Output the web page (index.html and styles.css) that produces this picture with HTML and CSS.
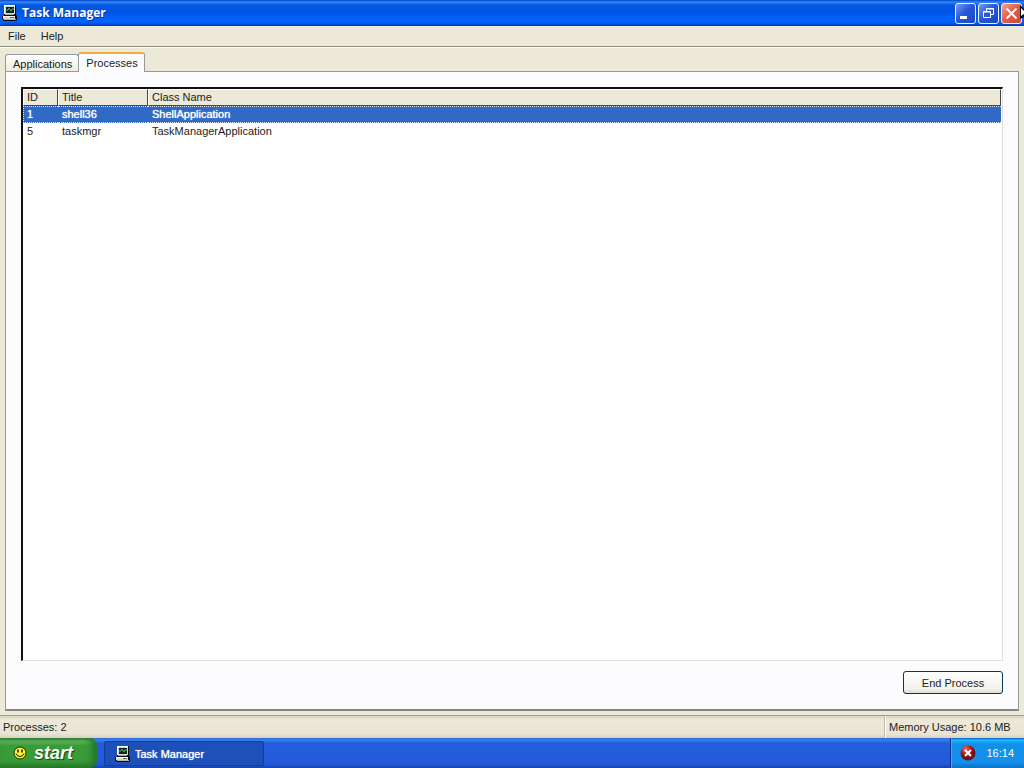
FILE: index.html
```html
<!DOCTYPE html>
<html lang="en">
<head>
<meta charset="utf-8">
<meta name="viewport" content="width=device-width, initial-scale=1">
<title>Task Manager</title>
<link rel="stylesheet" href="styles.css">
</head>
<body>
<svg class="defs" width="0" height="0" aria-hidden="true">
  <symbol id="computer" viewBox="0 0 16 16">
    <path d="M2 0h12v10l1 1v4l-1 1H2l-2-2v-3h2z" fill="#080c14"/>
    <path d="M2 0h11v9H2zM1 11h12v3H1z" fill="#d9d8cb"/>
    <path d="M2 0h11v1H3v8H2zM1 11h12v1H1z" fill="#fff"/>
    <path d="M4 2h8v6H4z" fill="#10231c"/>
    <path d="M4 5h2l1-2 2 3 1-2h2" fill="none" stroke="#47b584"/>
    <path d="M3 9h9v1H3z" fill="#aaa99e"/>
    <path d="M8 12.500h4" stroke="#62695f"/>
    <path d="M2 14h12v1H2z" fill="#b6b5aa"/>
  </symbol>
</svg>
<div class="desktop">
  <main class="window">
    <header class="titlebar">
      <svg class="icon"><use href="#computer"/></svg>
      <h1 class="title">Task Manager</h1>
      <div class="controls">
        <button class="control" aria-label="Minimize"><svg viewBox="0 0 19 19"><path d="M4 12h7v3H4z" fill="#fff"/></svg></button>
        <button class="control" aria-label="Restore"><svg viewBox="0 0 19 19"><path d="M7.500 7V4.500h7v6H12M7 5h8M4.500 7.500h7v6h-7zM4 8h8" fill="none" stroke="#fff"/></svg></button>
        <button class="control close" aria-label="Close"><svg viewBox="0 0 19 19"><path d="M4.500 4.500l10 10m0-10l-10 10" stroke="#fff" stroke-width="2"/></svg></button>
      </div>
      <svg class="pointer" viewBox="0 0 4 14"><path d="M0 0v14l4-2V4z" fill="#000"/><path d="M1 3v8l3-2V6z" fill="#fff"/></svg>
    </header>
    <nav class="menubar"><button class="menu">File</button><button class="menu">Help</button></nav>
    <div class="content">
      <div class="tabs" role="tablist">
        <button class="tab" role="tab" aria-selected="false">Applications</button>
        <button class="tab active" role="tab" aria-selected="true">Processes</button>
      </div>
      <section class="panel" role="tabpanel" aria-label="Processes">
        <div class="list">
          <table class="processes">
            <colgroup><col class="col-id"><col class="col-title"><col></colgroup>
            <thead><tr><th>ID</th><th>Title</th><th>Class Name</th></tr></thead>
            <tbody>
              <tr class="selected"><td>1</td><td>shell36</td><td>ShellApplication</td></tr>
              <tr><td>5</td><td>taskmgr</td><td>TaskManagerApplication</td></tr>
            </tbody>
          </table>
        </div>
        <button class="end">End Process</button>
      </section>
    </div>
    <footer class="status"><span>Processes: 2</span><span class="memory">Memory Usage: 10.6 MB</span></footer>
  </main>
  <nav class="taskbar">
    <button class="start">
      <svg class="smiley" viewBox="0 0 14 14"><circle cx="7" cy="7" r="6" fill="#fff22c" stroke="#153908"/><path d="M5 3.500v3M9 3.500v3" stroke="#111" stroke-width="1.500"/><path d="M3 7.500q1 3 4 3t4-3" fill="none" stroke="#111"/></svg>
      <span>start</span>
    </button>
    <button class="task"><svg class="icon"><use href="#computer"/></svg><span>Task Manager</span></button>
    <div class="tray">
      <svg class="alert" viewBox="0 0 16 16" role="img" aria-label="Alert"><defs><radialGradient id="red" cx=".35" cy=".25"><stop offset="0" stop-color="#ef7770"/><stop offset=".6" stop-color="#c91b18"/><stop offset="1" stop-color="#760e18"/></radialGradient></defs><circle cx="8" cy="8" r="7.500" fill="url(#red)"/><path d="M5 5l6 6m0-6l-6 6" stroke="#fff" stroke-width="2.200"/></svg>
      <time>16:14</time>
    </div>
  </nav>
</div>
</body>
</html>
```
FILE: styles.css
```css
* { box-sizing: border-box; }
body { margin: 0; font: 11px/14px "Liberation Sans", Arial, sans-serif; color: #222; }
button { font: inherit; color: inherit; padding: 0; margin: 0; border: 0; background: none; }
svg { display: block; }
.defs { position: absolute; }
.icon { width: 16px; height: 16px; flex: none; }
.desktop, .window { display: flex; flex-direction: column; }
.desktop { height: 100vh; overflow: hidden; }
.window { flex: 1; min-height: 0; background: #ece9d8; }

.titlebar { position: relative; flex: none; display: flex; align-items: center; gap: 4px; height: 26px; padding: 0 2px; background: linear-gradient(#0842c4 0, #2e8aff 2px, #0757df 5px, #0054e6 12px, #0064ff 21px, #005bf0 23px, #0039ba 26px); }
.title { flex: 1; margin: 0; color: #fff; font: 700 12px/18px "Open Sans", "Noto Sans", sans-serif; text-shadow: 1px 1px #0831a0; }
.controls { display: flex; gap: 2px; }
.control { width: 21px; height: 21px; border: 1px solid #e9f1ff; border-radius: 3px; background: linear-gradient(135deg, #779bf0, #2859d8 45%, #1746c1); }
.control svg { width: 19px; height: 19px; }
.close { background: linear-gradient(135deg, #f4a28c, #e36049 45%, #cf4932); }
.pointer { position: absolute; top: 5px; right: 0; width: 4px; height: 14px; }

.menubar { flex: none; display: flex; gap: 3px; height: 21px; padding: 0 2px; border-bottom: 1px solid #8f8d80; }
.menu { height: 20px; padding: 0 6px; }
.content { flex: 1; min-height: 0; display: flex; flex-direction: column; padding: 5px 5px 4px; border-top: 1px solid #fff; }
.tabs { flex: none; display: flex; align-items: flex-end; height: 18px; }
.tab { height: 17px; padding: 1px 6px 0 7px; border: 1px solid #919b9c; border-bottom: 0; border-radius: 3px 3px 0 0; background: linear-gradient(#fff, #eeece0); }
.active { position: relative; height: 20px; margin: 0 0 -1px -1px; padding-bottom: 2px; border-top: 2px solid #f3ad3d; background: #fcfcfe; }
.panel { flex: 1; min-height: 0; display: flex; flex-direction: column; align-items: flex-end; gap: 10px; padding: 15px; border: 1px solid #919b9c; border-bottom: 2px solid #85877f; background: #fcfcfe; }
.list { flex: 1; width: 100%; min-height: 0; overflow: hidden; border: 2px solid #111; border-right: 1px solid #dedfdc; border-bottom: 1px solid #dedfdc; padding-right: 1px; background: #fff; }
.processes { width: 100%; table-layout: fixed; border-collapse: separate; border-spacing: 0; }
.col-id { width: 35px; }
.col-title { width: 90px; }
th { height: 17px; padding: 0 3px; text-align: left; font-weight: normal; background: #ece9d8; border-top: 1px solid #fff; border-left: 1px solid #fff; border-right: 1px solid #444; border-bottom: 1px solid #444; line-height: 13px; }
td { height: 17px; padding: 0 4px; line-height: 13px; }
.selected { color: #fff; }
.selected td { background: #316ac5; border-top: 1px dotted #dce9ff; border-bottom: 1px dotted #dce9ff; text-shadow: 0 0 1px #fff; }
.selected td:first-child { border-left: 1px dotted #dce9ff; padding-left: 3px; }
.end { flex: none; width: 100px; height: 23px; border: 1px solid #003c55; border-radius: 3px; background: linear-gradient(#fff, #f1f2ed 80%, #dedbd0); }

.status { flex: none; display: flex; justify-content: space-between; height: 23px; line-height: 22px; padding-left: 3px; border-top: 1px solid #a09e8f; background: linear-gradient(#d5d2c1, #ece9d8 4px, #e9e5d4 18px, #d6d2c2); }
.memory { width: 140px; padding-left: 4px; border-left: 1px solid #bebaab; box-shadow: inset 1px 0 #fff; }

.taskbar { flex: none; display: flex; align-items: stretch; height: 30px; color: #fff; background: linear-gradient(#3169d1, #3880ef 2px, #245edb 5px, #2259dc 26px, #1941a5); }
.start { display: flex; align-items: center; gap: 7px; width: 97px; padding: 0 0 0 13px; border-radius: 0 8px 8px 0; font-size: 18px; line-height: 28px; font-weight: bold; font-style: italic; text-shadow: 1px 1px 1px #173f16; background: linear-gradient(#358435, #62b45d 3px, #389b38 8px, #389b38 23px, #267a29); box-shadow: inset -5px 0 6px #23752b; }
.smiley { width: 14px; height: 14px; }
.task { display: flex; align-items: center; gap: 4px; width: 160px; margin: 3px 0 2px 7px; padding: 0 10px; border: 1px solid #123c9d; border-radius: 2px; background: #1e50b9; text-shadow: 0 0 1px #fff; }
.tray { display: flex; align-items: center; gap: 10px; margin-left: auto; padding: 0 10px 0 9px; border-left: 1px solid #0b318a; background: linear-gradient(#0c59b9, #18bbff 2px, #1290e8 6px, #1490eb 24px, #0e6fc8); box-shadow: inset 1px 0 #18bbff; }
.alert { width: 16px; height: 16px; }
```
